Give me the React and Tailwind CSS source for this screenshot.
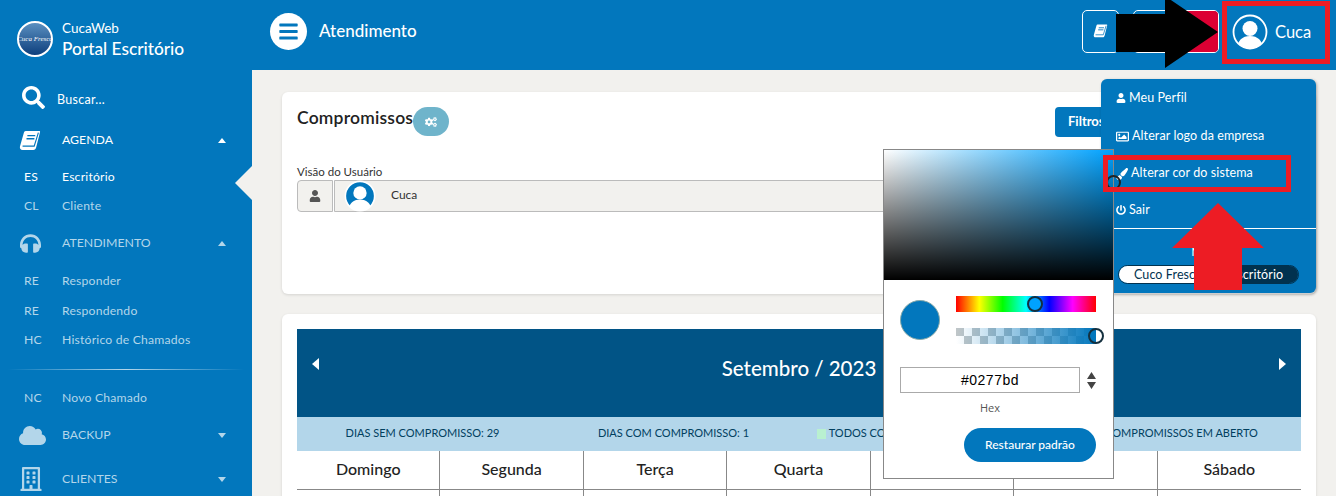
import React from 'react';
import { FaSearch, FaHeadphones, FaCloud, FaRegBuilding, FaUser, FaRegImage, FaPaintBrush, FaPowerOff, FaCogs, FaBars } from 'react-icons/fa';

const BookIcon = ({ className }) => (
  <svg viewBox="0 0 24 24" className={className} fill="currentColor">
    <path d="M7 1h15.5c.8 0 1.2.6 1 1.3L19 20c-.4 1.5-1.5 2.800-3.200 2.800H3.500C1.300 22.800 0 21 .5 18.800L5 3c.3-1.200 1-2 2-2z" />
    <path d="M3.500 18.500h13.300L21.600 3" fill="none" stroke="#0277bd" strokeWidth="1.300" />
    <path d="M9 6.500h9M8 10h9" fill="none" stroke="#0277bd" strokeWidth="1.500" />
  </svg>
);

const Avatar = ({ className }) => (
  <svg viewBox="0 0 36 36" className={className}>
    <defs>
      <clipPath id="avatarClip"><circle cx="18" cy="18" r="16.500" /></clipPath>
    </defs>
    <circle cx="18" cy="18" r="16.500" fill="#0277bd" />
    <g clipPath="url(#avatarClip)" fill="#fff">
      <circle cx="18" cy="14.500" r="7.500" />
      <path d="M5 36c0-9 5-14 13-14s13 5 13 14z" />
    </g>
    <circle cx="18" cy="18" r="16.500" fill="none" stroke="#fff" strokeWidth="1.800" />
  </svg>
);

const Caret = ({ up }) => (
  <svg viewBox="0 0 8 5" className="ml-auto h-[5px] w-2" fill="currentColor">
    <path d={up ? 'M4 0l4 5H0z' : 'M0 0h8L4 5z'} />
  </svg>
);

const SectionRow = ({ icon, label, up, active, className }) => (
  <div className={`flex shrink-0 items-center pl-[19px] pr-[26px] ${active ? 'text-white' : 'text-[#b3d6ea]'} ${className}`}>
    <span className="flex w-[43px] items-center">{icon}</span>
    <span className="text-[12.300px]">{label}</span>
    <Caret up={up} />
  </div>
);

const SubRow = ({ short, label, active, className }) => (
  <div className={`flex shrink-0 items-center pl-[24px] text-[12.200px] tracking-[0.2px] ${active ? 'text-white' : 'text-[#b3d6ea]'} ${className}`}>
    <span className="w-[38px]">{short}</span>
    <span>{label}</span>
  </div>
);

const Sidebar = () => (
  <aside className="flex w-[252px] shrink-0 flex-col bg-[#0277bd]">
    <div className="flex h-[81px] shrink-0 items-center pb-[3px] pl-[17px]">
      <div className="flex h-9 w-9 items-center justify-center overflow-hidden rounded-full border-2 border-white bg-[linear-gradient(to_bottom,#5a8fc0,#0e3f7d)]">
        <span className="whitespace-nowrap font-['Liberation_Serif',serif] text-[7px] italic leading-none text-white">Cuca Fresca</span>
      </div>
      <div className="ml-[9px] flex flex-col text-white">
        <span className="text-[13.500px] leading-[18px]">CucaWeb</span>
        <span className="text-[17.300px] font-medium leading-[23px]">Portal Escritório</span>
      </div>
    </div>
    <div className="flex h-[39px] shrink-0 items-center pl-[22px] text-white">
      <FaSearch className="mb-[6px] h-[23px] w-[23px]" />
      <span className="ml-[12px] text-[12.500px] tracking-[0.3px]">Buscar...</span>
    </div>
    <SectionRow active up icon={<BookIcon className="h-[21px] w-[22px]" />} label="AGENDA" className="h-[40px]" />
    <SubRow active short="ES" label="Escritório" className="h-[34px]" />
    <SubRow short="CL" label="Cliente" className="h-[24px]" />
    <SectionRow up icon={<FaHeadphones className="h-[21px] w-[23px]" />} label="ATENDIMENTO" className="h-[50px]" />
    <SubRow short="RE" label="Responder" className="h-[26px]" />
    <SubRow short="RE" label="Respondendo" className="h-[34px]" />
    <SubRow short="HC" label="Histórico de Chamados" className="h-[24px]" />
    <div className="mx-[8px] mt-[17px] h-px shrink-0 bg-[linear-gradient(to_right,transparent,#b3d6ea,transparent)]" />
    <SubRow short="NC" label="Novo Chamado" className="mt-[14px] h-[28px]" />
    <SectionRow icon={<FaCloud className="h-[25px] w-[27px]" />} label="BACKUP" className="h-[46px]" />
    <SectionRow icon={<FaRegBuilding className="h-[24px] w-[24px]" />} label="CLIENTES" className="h-[42px]" />
  </aside>
);

const Header = () => (
  <header className="flex h-[70px] shrink-0 items-center bg-[#0277bd] pb-[8px] pl-[18px] pr-[6px] text-white">
    <div className="flex h-[37px] w-[37px] items-center justify-center rounded-full bg-white text-[#0277bd]">
      <FaBars className="h-[21px] w-[19px]" />
    </div>
    <span className="ml-[12px] text-[17px] font-medium">Atendimento</span>
    <div className="ml-auto flex items-center">
      <div className="flex h-[43px] w-[37px] items-center justify-center rounded-[5px] border border-white">
        <BookIcon className="h-[14px] w-[15px]" />
      </div>
      <div className="ml-[14px] h-[43px] w-[86px] overflow-hidden rounded-[5px] border border-white">
        <div className="ml-[40px] h-full bg-[#dc0033]" />
      </div>
    </div>
    <div className="ml-[13px] flex w-[98px] items-center pt-[2px]">
      <Avatar className="h-9 w-9 shrink-0" />
      <span className="ml-[7px] text-[16.500px]">Cuca</span>
    </div>
  </header>
);

const FirstCard = () => (
  <section className="h-[202px] rounded-[6px] bg-white p-[15px] shadow-[0_1px_3px_rgba(0,0,0,0.12)]">
    <div className="flex h-[56px] items-start">
      <h2 className="text-[17.500px] font-semibold leading-[22px] tracking-[0.2px] text-[#222]">Compromissos</h2>
      <div className="flex h-[29px] w-9 items-center justify-center rounded-full bg-[#6fb4cb] text-white">
        <FaCogs className="h-3 w-3" />
      </div>
      <div className="ml-auto mr-[146px] flex h-[30px] w-[100px] items-center rounded-[4px] bg-[#0277bd] pl-[13px] text-[13px] font-bold text-white">Filtros</div>
    </div>
    <label className="block text-[11.500px] leading-[17px] text-[#333]">Visão do Usuário</label>
    <div className="flex h-[32px] pr-[190px]">
      <div className="flex w-9 items-center justify-center rounded-l-[4px] border border-[#bbb] bg-[#f2f1ee] text-[#555]">
        <FaUser className="h-3 w-3" />
      </div>
      <div className="ml-px flex flex-1 items-center rounded-r-[4px] border border-[#bbb] bg-[#f2f1ee] pl-[9px]">
        <Avatar className="h-[32px] w-[32px] shrink-0" />
        <span className="mb-[3px] ml-[15px] text-[12px] text-[#333]">Cuca</span>
      </div>
    </div>
  </section>
);

const legend = [
  { text: 'DIAS SEM COMPROMISSO: 29' },
  { text: 'DIAS COM COMPROMISSO: 1' },
  { text: 'TODOS COMPROMISSOS CONCLUÍDOS', swatch: 'bg-[#b9f0d0]' },
  { text: 'COMPROMISSOS EM ABERTO', swatch: 'bg-[#f5d68a]' },
];

const days = ['Domingo', 'Segunda', 'Terça', 'Quarta', 'Quinta', 'Sexta', 'Sábado'];

const Calendar = () => (
  <section className="mt-[20px] rounded-[6px] bg-white p-[15px] shadow-[0_1px_3px_rgba(0,0,0,0.12)]">
    <div className="flex h-[88px] items-center justify-between bg-[#015486] px-[15px] pb-[10px] text-white">
      <svg viewBox="0 0 7 12" className="mb-[8px] h-3 w-[7px]" fill="currentColor"><path d="M7 0v12L0 6z" /></svg>
      <span className="text-[20.500px] font-medium">Setembro / 2023</span>
      <svg viewBox="0 0 7 12" className="mb-[8px] h-3 w-[7px]" fill="currentColor"><path d="M0 0v12l7-6z" /></svg>
    </div>
    <div className="grid h-[34px] grid-cols-4 bg-[#b3d6ea] pb-px text-[11px] text-[#01405f]">
      {legend.map((item) => (
        <div key={item.text} className="flex items-center justify-center whitespace-nowrap">
          {item.swatch && <span className={`mr-[3px] h-[10px] w-[9px] ${item.swatch}`} />}
          {item.text}
        </div>
      ))}
    </div>
    <div className="grid grid-cols-7">
      {days.map((day, i) => (
        <div key={day} className={`flex h-[39px] items-center justify-center border-b border-[#888] pb-[2px] text-[16px] font-medium text-[#222] ${i < 6 ? 'border-r' : ''}`}>
          {day}
        </div>
      ))}
      {days.map((day, i) => (
        <div key={day} className={`h-[40px] ${i < 6 ? 'border-r border-[#888]' : ''}`} />
      ))}
    </div>
  </section>
);

const ProfileMenu = () => (
  <div className="absolute left-[1101px] top-[79px] h-[214px] w-[215px] rounded-[6px] bg-[#0277bd] text-[12.500px] tracking-[0.1px] text-white shadow-[1px_1px_3px_rgba(0,0,0,0.3)]">
    <div className="flex h-[37px] items-center pl-[15px] pt-[1px]"><FaUser className="mr-[3px] h-[10px] w-[10px]" />Meu Perfil</div>
    <div className="flex h-[39px] items-center pl-[15px] pt-[1px]"><FaRegImage className="mr-[3px] h-[13px] w-[13px]" />Alterar logo da empresa</div>
    <div className="flex h-[37px] items-center pl-[15px]"><FaPaintBrush className="mr-[3px] h-3 w-3" />Alterar cor do sistema</div>
    <div className="flex h-[36px] items-center pl-[15px]"><FaPowerOff className="mr-[3px] h-[10px] w-[10px]" />Sair</div>
    <div className="h-px bg-white" />
    <div className="flex h-[36px] items-center justify-center pt-[10px] text-[12px]">Matriz</div>
    <div className="mx-[17px] flex h-[19px] overflow-hidden rounded-full border border-[#01324f] text-[12.500px]">
      <span className="w-[100px] whitespace-nowrap bg-white pl-[15px] leading-[17px] text-[#01324f]">Cuco Fresco</span>
      <span className="flex-1 whitespace-nowrap bg-[#01324f] pl-[11px] leading-[17px]">Escritório</span>
    </div>
  </div>
);

const ColorPicker = () => (
  <div className="absolute left-[883px] top-[149px] h-[330px] w-[231px] border border-[#888] bg-white">
    <div className="relative h-[130px] bg-[linear-gradient(to_top,#000,transparent),linear-gradient(to_right,#fff,#00a2ff)]">
      <span className="absolute right-[-8px] top-[25px] h-[15px] w-[15px] rounded-full border-2 border-[#222]" />
    </div>
    <div className="mt-[20px] flex pl-[16px]">
      <span className="h-10 w-10 rounded-full border border-[#8aa] bg-[#0277bd]" />
      <div className="ml-[16px] w-[140px]">
        <div className="relative mt-[-4px] h-4 bg-[linear-gradient(to_right,#f00,#ff0,#0f0,#0ff,#00f,#f0f,#f00)]">
          <span className="absolute left-[71px] top-0 h-4 w-4 rounded-full border-2 border-[#14303f] bg-[#00a2ff]" />
        </div>
        <div className="relative mt-4 h-4 bg-[repeating-conic-gradient(#fff_0_25%,#c0c6c8_0_50%)] bg-[size:16px_16px]">
          <div className="h-full bg-[linear-gradient(to_right,transparent,#0277bd)]" />
          <span className="absolute right-[-8px] top-0 h-4 w-4 rounded-full border-2 border-[#14303f] bg-[linear-gradient(to_right,#0277bd_50%,#fff_50%)]" />
        </div>
      </div>
    </div>
    <div className="mt-[23px] flex items-center pl-[16px]">
      <div className="flex h-[26px] w-[180px] items-center justify-center border border-[#aaa] font-['Liberation_Sans',sans-serif] text-[14px] tracking-[0.5px] text-black">#0277bd</div>
      <svg viewBox="0 0 9 17" className="ml-[7px] h-[17px] w-[9px]" fill="#444"><path d="M4.500 0L9 7H0zM0 10h9l-4.500 7z" /></svg>
    </div>
    <div className="mt-[7px] w-[212px] text-center font-['Open_Sans',sans-serif] text-[11px] text-[#555]">Hex</div>
    <div className="mt-[11px] flex justify-end pr-[17px]">
      <div className="flex h-[34px] w-[132px] items-center justify-center rounded-full bg-[#0277bd] text-[12px] font-medium text-white">Restaurar padrão</div>
    </div>
  </div>
);

const Annotations = () => (
  <>
    <div className="absolute left-[1222px] top-px h-[63px] w-[108px] border-[5px] border-[#ed1c24]" />
    <div className="absolute left-[1103px] top-[155px] h-[37px] w-[188px] border-[5px] border-[#ed1c24]" />
    <svg viewBox="0 0 110 72" className="absolute left-[1112px] top-0 h-[72px] w-[110px]" fill="#000">
      <path d="M4 14h49V-4l53 36-53 36V52H4z" />
    </svg>
    <svg viewBox="0 0 100 92" className="absolute left-[1168px] top-[200px] h-[92px] w-[100px]" fill="#ed1c24">
      <path d="M50 3l46 45H74v42H26V48H4z" />
    </svg>
  </>
);

export default function App() {
  return (
    <div className="relative flex h-[496px] w-[1336px] overflow-hidden bg-[#f2f1ee] font-['Lato',sans-serif]">
      <Sidebar />
      <main className="flex min-w-0 flex-1 flex-col">
        <Header />
        <div className="pl-[30px] pr-[20px] pt-[22px]">
          <FirstCard />
          <Calendar />
        </div>
      </main>
      {/* active page notch */}
      <svg viewBox="0 0 17 34" className="absolute left-[235px] top-[166px] h-[34px] w-[17px]" fill="#f2f1ee"><path d="M17 0v34L0 17z" /></svg>
      <ProfileMenu />
      <ColorPicker />
      <Annotations />
    </div>
  );
}
